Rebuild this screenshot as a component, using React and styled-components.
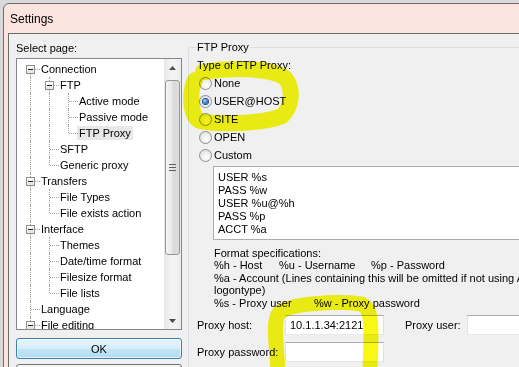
import React from 'react'
import styled, { createGlobalStyle } from 'styled-components'

const GlobalStyle = createGlobalStyle`
	html, body {
		margin: 0;
		padding: 0;
		overflow: hidden;
	}
	body {
		background: #dadada;
		font-family: 'Liberation Sans', Arial, sans-serif;
		font-size: 11px;
		color: #000;
	}
`

const treeItems = [
	{ label: 'Connection', level: 0, box: true, up: false, down: true },
	{ label: 'FTP', level: 1, box: true, up: true, down: true, guides: [true] },
	{ label: 'Active mode', level: 2, up: true, down: true, guides: [true, true] },
	{ label: 'Passive mode', level: 2, up: true, down: true, guides: [true, true] },
	{ label: 'FTP Proxy', level: 2, up: true, down: false, guides: [true, true], selected: true },
	{ label: 'SFTP', level: 1, up: true, down: true, guides: [true] },
	{ label: 'Generic proxy', level: 1, up: true, down: false, guides: [true] },
	{ label: 'Transfers', level: 0, box: true, up: true, down: true },
	{ label: 'File Types', level: 1, up: true, down: true, guides: [true] },
	{ label: 'File exists action', level: 1, up: true, down: false, guides: [true] },
	{ label: 'Interface', level: 0, box: true, up: true, down: true },
	{ label: 'Themes', level: 1, up: true, down: true, guides: [true] },
	{ label: 'Date/time format', level: 1, up: true, down: true, guides: [true] },
	{ label: 'Filesize format', level: 1, up: true, down: true, guides: [true] },
	{ label: 'File lists', level: 1, up: true, down: false, guides: [true] },
	{ label: 'Language', level: 0, up: true, down: true },
	{ label: 'File editing', level: 0, box: true, up: true, down: true },
]

const proxyTypes = [
	{ label: 'None' },
	{ label: 'USER@HOST', checked: true },
	{ label: 'SITE' },
	{ label: 'OPEN' },
	{ label: 'Custom' },
]

const commands = ['USER %s', 'PASS %w', 'USER %u@%h', 'PASS %p', 'ACCT %a']

const App = () => {
	return (
		<Screen>
			<GlobalStyle />
			<Window>
				<TitleBar>Settings</TitleBar>
				<Client>
					<LeftColumn>
						<PageLabel>Select page:</PageLabel>
						<TreeBox>
							<TreeList>
								{treeItems.map((item) => (
									<TreeRow key={item.label}>
										{(item.guides || []).map((g, i) => (
											<Cell key={i} $up={g} $down={g} />
										))}
										<Cell $up={item.up} $down={item.down} $h>
											{item.box && <ExpandBox />}
										</Cell>
										<TreeLabel $selected={item.selected}>{item.label}</TreeLabel>
									</TreeRow>
								))}
							</TreeList>
							<ScrollBar>
								<ArrowButton>
									<svg width="7" height="4" viewBox="0 0 7 4">
										<polygon points="0,4 3.5,0 7,4" fill="#4d4d4d" />
									</svg>
								</ArrowButton>
								<Thumb>
									<svg width="7" height="7" viewBox="0 0 7 7">
										<rect x="0" y="0" width="7" height="1" fill="#5f5f5f" />
										<rect x="0" y="3" width="7" height="1" fill="#5f5f5f" />
										<rect x="0" y="6" width="7" height="1" fill="#5f5f5f" />
									</svg>
								</Thumb>
								<ArrowButton $bottom>
									<svg width="7" height="4" viewBox="0 0 7 4">
										<polygon points="0,0 3.5,4 7,0" fill="#4d4d4d" />
									</svg>
								</ArrowButton>
							</ScrollBar>
						</TreeBox>
						<OkButton>OK</OkButton>
						<CancelButton />
					</LeftColumn>

					<RightColumn>
						<Group>
							<Legend>FTP Proxy</Legend>
							<TypeLabel>Type of FTP Proxy:</TypeLabel>
							<RadioList>
								{proxyTypes.map((t) => (
									<RadioRow key={t.label}>
										<RadioDot $checked={t.checked} />
										<span>{t.label}</span>
									</RadioRow>
								))}
							</RadioList>
							<CommandBox>
								{commands.map((c) => (
									<div key={c}>{c}</div>
								))}
							</CommandBox>
							<Specs>
								<div>Format specifications:</div>
								<div>
									<SpecCol $w={65}>%h - Host</SpecCol>
									<SpecCol $w={92}>%u - Username</SpecCol>
									<SpecCol>%p - Password</SpecCol>
								</div>
								<div>%a - Account (Lines containing this will be omitted if not using Account</div>
								<div>logontype)</div>
								<div>
									<SpecCol $w={100}>%s - Proxy user</SpecCol>
									<SpecCol>%w - Proxy password</SpecCol>
								</div>
							</Specs>
							<Fields>
								<FieldLabel>Proxy host:</FieldLabel>
								<Input>10.1.1.34:2121</Input>
								<FieldLabel $indent>Proxy user:</FieldLabel>
								<Input />
								<FieldLabel>Proxy password:</FieldLabel>
								<Input />
							</Fields>
						</Group>
					</RightColumn>
				</Client>
			</Window>

			<Marker width="519" height="367" viewBox="0 0 519 367">
				<path
					d="M 203 72 C 232 67, 272 68, 285 78 C 294 88, 292 107, 282 116 C 262 124, 218 125, 200 121 C 190 117, 189 92, 195 80"
					fill="none"
					stroke="#f8f800"
					strokeWidth="16"
					strokeLinecap="round"
				/>
				<path
					d="M 278 372 C 277 345, 272 322, 279 313 C 289 303, 338 301, 361 304 C 374 308, 371 332, 370 372"
					fill="none"
					stroke="#f8f800"
					strokeWidth="15"
					strokeLinecap="round"
				/>
			</Marker>
		</Screen>
	)
}

const Screen = styled.div`
	position: relative;
	width: 519px;
	height: 367px;
	overflow: hidden;
	padding: 3px 0 0 3px;
	box-sizing: border-box;
`

const Window = styled.div`
	width: 640px;
	height: 420px;
	box-sizing: border-box;
	border: 1px solid #6f6f6f;
	border-radius: 6px 6px 0 0;
	background: #fbe3de;
	display: flex;
	flex-direction: column;
`

const TitleBar = styled.div`
	height: 29px;
	flex: none;
	display: flex;
	align-items: center;
	padding-left: 6px;
	font-size: 12px;
	color: #000;
`

const Client = styled.div`
	flex: 1;
	margin-left: 4px;
	border-top: 1px solid #6a6a6a;
	border-left: 1px solid #6a6a6a;
	background: #f0f0f0;
	display: flex;
	gap: 6px;
	padding-left: 7px;
`

const LeftColumn = styled.div`
	width: 166px;
	flex: none;
	display: flex;
	flex-direction: column;
	padding-top: 8px;
`

const PageLabel = styled.div`
	line-height: 13px;
	margin-bottom: 3px;
`

const TreeBox = styled.div`
	height: 272px;
	box-sizing: border-box;
	border: 1px solid #828790;
	background: #fff;
	display: flex;
`

const TreeList = styled.div`
	flex: 1;
	overflow: hidden;
	padding: 2px 0 0 4px;
`

const TreeRow = styled.div`
	display: flex;
	align-items: center;
	height: 16px;
	white-space: nowrap;
`

const Cell = styled.span`
	position: relative;
	flex: none;
	width: 19px;
	height: 16px;

	&::before {
		content: '';
		position: absolute;
		left: 9px;
		top: ${({ $up }) => ($up ? '0' : '8px')};
		bottom: ${({ $down }) => ($down ? '0' : '8px')};
		border-left: 1px dotted #a0a0a0;
		display: ${({ $up, $down }) => ($up || $down ? 'block' : 'none')};
	}

	&::after {
		content: '';
		position: absolute;
		left: 10px;
		right: 0;
		top: 8px;
		border-top: 1px dotted #a0a0a0;
		display: ${({ $h }) => ($h ? 'block' : 'none')};
	}
`

const ExpandBox = styled.span`
	position: absolute;
	z-index: 1;
	left: 5px;
	top: 4px;
	width: 9px;
	height: 9px;
	box-sizing: border-box;
	border: 1px solid #919191;
	background: linear-gradient(#ffffff, #e2e2e2);

	&::after {
		content: '';
		position: absolute;
		left: 1px;
		top: 3px;
		width: 5px;
		height: 1px;
		background: #1f1f1f;
	}
`

const TreeLabel = styled.span`
	padding: 0 2px;
	margin-left: -1px;
	line-height: 14px;
	background: ${({ $selected }) => ($selected ? '#e8e8e8' : 'transparent')};
`

const ScrollBar = styled.div`
	width: 17px;
	flex: none;
	display: flex;
	flex-direction: column;
	background: linear-gradient(to right, #e6e6e6, #f3f3f3 40%, #f3f3f3 70%, #ebebeb);
`

const ArrowButton = styled.div`
	height: 17px;
	flex: none;
	display: flex;
	align-items: center;
	justify-content: center;
	margin-top: ${({ $bottom }) => ($bottom ? 'auto' : '0')};
`

const Thumb = styled.div`
	margin: 4px 1px 0 1px;
	height: 175px;
	box-sizing: border-box;
	border: 1px solid #979797;
	border-radius: 3px;
	background: linear-gradient(to right, #f4f4f4, #e9e9e9 45%, #d9d9d9 55%, #dedede);
	display: flex;
	align-items: center;
	justify-content: center;
`

const OkButton = styled.div`
	margin-top: 8px;
	height: 21px;
	flex: none;
	box-sizing: border-box;
	border: 1px solid #3c7fb1;
	border-radius: 3px;
	background: linear-gradient(#e6f5fd, #d6eefb 50%, #c2e4f6 51%, #b3dcf3);
	display: flex;
	align-items: center;
	justify-content: center;
	box-shadow: inset 0 0 0 1px rgba(255, 255, 255, 0.6);
`

const CancelButton = styled(OkButton)`
	margin-top: 5px;
	border-color: #707070;
	background: linear-gradient(#f2f2f2, #ebebeb 50%, #dddddd 51%, #cfcfcf);
`

const RightColumn = styled.div`
	flex: 1;
	padding-top: 7px;
`

const Group = styled.fieldset`
	margin: 0;
	width: 420px;
	height: 400px;
	box-sizing: border-box;
	border: 1px solid #d5dfe5;
	border-radius: 3px;
	padding: 0 8px;
	min-width: 0;
`

const Legend = styled.legend`
	padding: 0 1px;
	margin-left: -1px;
	line-height: 13px;
`

const TypeLabel = styled.div`
	margin-top: 5px;
	line-height: 13px;
`

const RadioList = styled.div`
	margin-top: 2px;
	display: flex;
	flex-direction: column;
`

const RadioRow = styled.div`
	height: 18px;
	display: flex;
	align-items: center;
	gap: 2px;
	padding-left: 2px;
`

const RadioDot = styled.span`
	position: relative;
	width: 13px;
	height: 13px;
	box-sizing: border-box;
	border-radius: 50%;
	border: 1px solid #8e8f8f;
	background: radial-gradient(circle at 60% 65%, #ffffff 0%, #f1f1f1 40%, #d3d3d3 100%);

	&::after {
		content: '';
		display: ${({ $checked }) => ($checked ? 'block' : 'none')};
		position: absolute;
		left: 3px;
		top: 3px;
		width: 5px;
		height: 5px;
		border-radius: 50%;
		background: radial-gradient(circle at 35% 35%, #9fdcff, #2a6fc4 60%, #16449a);
		box-shadow: 0 0 0 1px #1b4f93;
	}
`

const CommandBox = styled.div`
	margin: 2px 0 0 16px;
	height: 74px;
	width: 400px;
	box-sizing: border-box;
	border: 1px solid #abadb3;
	border-right: none;
	background: #fff;
	padding: 4px;
	line-height: 13px;
	white-space: pre;
`

const Specs = styled.div`
	margin: 6.5px 0 0 17px;
	line-height: 12.6px;
	white-space: nowrap;
`

const SpecCol = styled.span`
	display: inline-block;
	width: ${({ $w }) => ($w ? `${$w}px` : 'auto')};
`

const Fields = styled.div`
	margin-top: 5.5px;
	display: grid;
	grid-template-columns: 88px 99px 83px 120px;
	grid-auto-rows: 20px;
	row-gap: 7px;
	align-items: center;
`

const FieldLabel = styled.div`
	padding-left: ${({ $indent }) => ($indent ? '21px' : '0')};
	white-space: nowrap;
`

const Input = styled.div`
	height: 20px;
	box-sizing: border-box;
	border: 1px solid;
	border-color: #abadb3 #dbdfe6 #e3e9ef #e2e3ea;
	background: #fff;
	padding-left: 4px;
	line-height: 18px;
`

const Marker = styled.svg`
	position: absolute;
	left: 0;
	top: 0;
	pointer-events: none;
	mix-blend-mode: multiply;
	opacity: 0.92;
`

export default App
